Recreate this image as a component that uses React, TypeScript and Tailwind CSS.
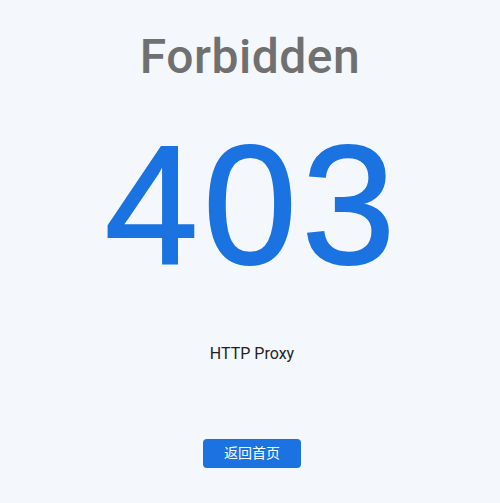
export default function App() {
  return (
    <div
      className="flex h-[503px] w-full flex-col items-center bg-[#f4f8fc]"
      style={{ fontFamily: 'Roboto, "Liberation Sans", "Noto Sans CJK SC", sans-serif' }}
    >
      <h1 className="mt-[25px] text-[48px] font-medium leading-[64px] tracking-[0.5px] text-[#707070]">
        Forbidden
      </h1>
      <div
        className="mt-[30px] pl-[5px] text-[168px] leading-[172px] tracking-[5px] text-[#1a73e0] [-webkit-text-stroke:2px_#1a73e0]"
        style={{ fontFamily: '"Liberation Sans", Arial, sans-serif' }}
      >
        403
      </div>
      <p className="mt-[53px] ml-[4px] text-[16px] leading-[20px] text-[#222]">HTTP Proxy</p>
      <button className="mt-[75px] ml-[4px] h-[29px] w-[98px] rounded-[4px] bg-[#1a73e0] text-[14px] leading-[29px] text-white">
        返回首页
      </button>
    </div>
  );
}
